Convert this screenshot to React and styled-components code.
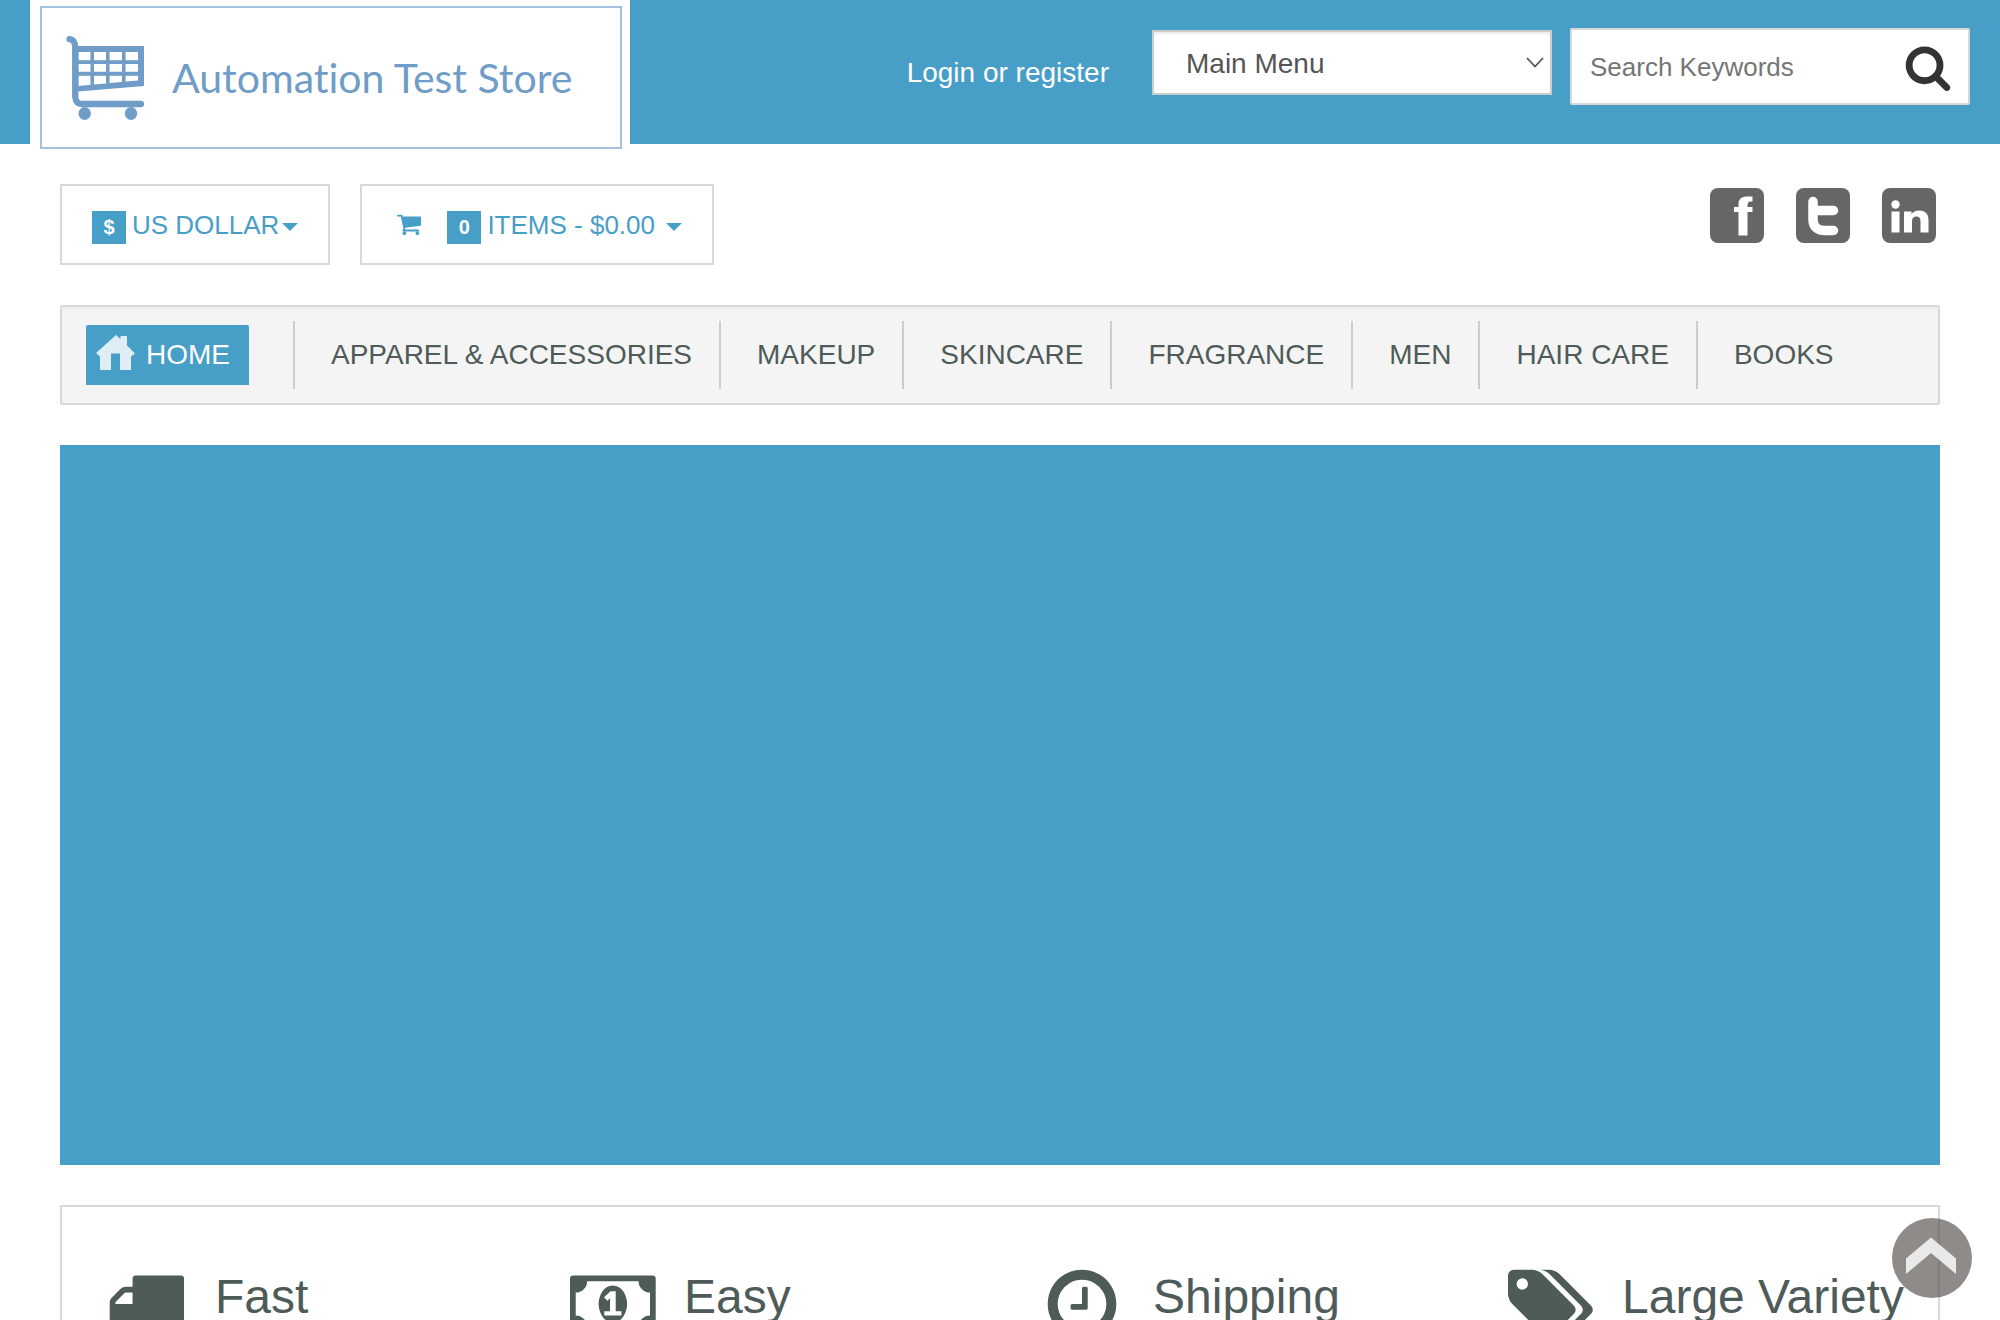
import React from "react";
import styled, { createGlobalStyle } from "styled-components";

const BLUE = "#479ec7";
const SLATE = "#4e5b58";
const LINE = "#d7d9d8";

const GlobalStyle = createGlobalStyle`
  *, *::before, *::after { box-sizing: border-box; }
  html { scrollbar-width: none; }
  body {
    margin: 0;
    background: #fff;
    color: ${SLATE};
    font-family: "Liberation Sans", Arial, Helvetica, sans-serif;
    font-size: 28px;
    line-height: 40px;
  }
  button, input, select { font: inherit; margin: 0; }
  a { color: inherit; text-decoration: none; }
  svg { display: block; flex: none; }
`;

const Page = styled.div`
  display: flex;
  flex-direction: column;
  min-height: 100vh;
`;

/* ---------- header ---------- */

const Header = styled.header`
  flex: none;
  display: flex;
  align-items: flex-start;
  padding: 0 30px;
  background: ${BLUE};
`;

const Logo = styled.a`
  flex: none;
  width: 600px;
  height: 149px;
  margin: 0 auto -5px 0;
  padding: 6px 8px 0 10px;
  background: #fff;
`;

const LogoFrame = styled.span`
  display: flex;
  align-items: center;
  gap: 28px;
  height: 100%;
  padding-left: 24px;
  border: 2px solid #a3c1e0;
  color: #6f9dc8;
  font-family: Lato, "Open Sans", sans-serif;
  font-size: 41px;
  font-variant-ligatures: none;
  white-space: nowrap;
`;

const Login = styled.a`
  margin: 53px 43px 0 20px;
  color: #fff;
  white-space: nowrap;
`;

const MenuBox = styled.div`
  position: relative;
  flex: 0 1 400px;
  min-width: 0;
  margin: 30px 18px 0 0;
  svg {
    position: absolute;
    right: 8px;
    top: 26px;
    pointer-events: none;
  }
`;

const MenuSelect = styled.select`
  display: block;
  appearance: none;
  width: 100%;
  height: 65px;
  padding: 2px 40px 0 32px;
  border: 2px solid #ccc;
  border-radius: 0;
  background: #fff;
  box-shadow: inset 0 2px 2px rgba(0, 0, 0, 0.075);
  color: #555;
`;

const Search = styled.form`
  flex: 0 1 400px;
  min-width: 0;
  display: flex;
  align-items: center;
  height: 77px;
  margin-top: 28px;
  padding: 0 16px 0 18px;
  border: 2px solid ${LINE};
  border-radius: 2px;
  background: #fff;
`;

const SearchInput = styled.input`
  flex: 1;
  min-width: 0;
  padding: 0;
  border: 0;
  outline: 0;
  background: none;
  font-size: 26px;
  &::placeholder { color: #757575; opacity: 1; }
`;

const IconButton = styled.button`
  padding: 0;
  border: 0;
  background: none;
  color: #333;
`;

/* ---------- body ---------- */

const Main = styled.main`
  flex: none;
  display: flex;
  flex-direction: column;
  gap: 40px;
  padding: 40px 60px;
`;

const Tools = styled.div`
  display: flex;
  align-items: flex-start;
  gap: 30px;
`;

const Dropdown = styled.button`
  display: flex;
  align-items: baseline;
  height: 81px;
  padding: 23px 30px 19px ${(p) => (p.$wide ? 34 : 30)}px;
  border: 2px solid ${LINE};
  background: #fff;
  color: ${BLUE};
  font-size: 26px;
  line-height: 33px;
  white-space: nowrap;
  > svg {
    align-self: flex-start;
    margin: 2px 25px 0 0;
  }
`;

const Badge = styled.span`
  width: 34px;
  margin-right: 6px;
  background: ${BLUE};
  color: #fff;
  font-size: 20px;
  font-weight: bold;
  line-height: 33px;
  text-align: center;
`;

const Caret = styled.span`
  align-self: flex-start;
  margin: 14px 0 0 ${(p) => (p.$wide ? 11 : 3)}px;
  border: solid transparent;
  border-width: 8px 8px 0;
  border-top-color: ${BLUE};
`;

const Socials = styled.div`
  display: flex;
  gap: 32px;
  margin: 4px 4px 0 auto;
`;

const Nav = styled.nav`
  display: flex;
  align-items: center;
  height: 100px;
  padding-left: 24px;
  border: 2px solid ${LINE};
  border-radius: 2px;
  background: #f4f4f4;
  box-shadow: inset 0 2px 2px rgba(0, 0, 0, 0.03);
  white-space: nowrap;
`;

const HomeLink = styled.a`
  display: flex;
  align-items: center;
  gap: 11px;
  height: 60px;
  margin-right: 44px;
  padding: 0 19px 0 10px;
  border-radius: 2px 2px 0 0;
  background: ${BLUE};
  color: #fff;
`;

const NavLink = styled.a`
  padding: 0 27px 0 36px;
  border-left: 2px solid #ccc;
  line-height: 68px;
`;

const Banner = styled.section`
  height: 720px;
  background: ${BLUE};
`;

const Features = styled.section`
  display: grid;
  grid-template-columns: repeat(4, 1fr);
  padding: 57px 0;
  border: 2px solid ${LINE};
`;

const Feature = styled.div`
  display: flex;
  align-items: flex-start;
  gap: 20px;
  padding-left: 31px;
`;

const FeatureIcon = styled.span`
  flex: none;
  display: flex;
  justify-content: center;
  width: 102px;
`;

const FeatureTitle = styled.h2`
  margin: 3px 0 0;
  font-size: 48px;
  font-weight: normal;
  line-height: 60px;
  white-space: nowrap;
`;

const ToTop = styled.a`
  position: fixed;
  right: 28px;
  bottom: 22px;
`;

/* ---------- drawings ---------- */

const GLYPHS = {
  cart: {
    w: 1792,
    d: "M704 1536q0 52-38 90t-90 38-90-38-38-90 38-90 90-38 90 38 38 90zm896 0q0 52-38 90t-90 38-90-38-38-90 38-90 90-38 90 38 38 90zm128-1088v512q0 24-16.5 42.5t-40.5 21.5l-1044 122q13 60 13 70 0 16-24 64h920q26 0 45 19t19 45-19 45-45 19h-1024q-26 0-45-19t-19-45q0-11 8-31.5t16-36 21.5-40 15.5-29.5l-177-823h-204q-26 0-45-19t-19-45 19-45 45-19h256q16 0 28.5 6.5t19.5 15.5 13 24.5 8 26 5.5 29.5 4.5 26h1201q26 0 45 19t19 45z",
  },
  search: {
    w: 1792,
    d: "M1216 832q0-185-131.5-316.5t-316.5-131.5-316.5 131.5-131.5 316.5 131.5 316.5 316.5 131.5 316.5-131.5 131.5-316.5zm512 832q0 52-38 90t-90 38q-54 0-90-38l-343-342q-179 124-399 124-143 0-273.5-55.5t-225-150-150-225-55.5-273.5 55.5-273.5 150-225 225-150 273.5-55.5 273.5 55.5 225 150 150 225 55.5 273.5q0 220-124 399l343 343q37 37 37 90z",
  },
  truck: {
    w: 1792,
    d: "M640 1408q0-52-38-90t-90-38-90 38-38 90 38 90 90 38 90-38 38-90zm-384-512h384v-256h-158q-13 0-22 9l-195 195q-9 9-9 22v30zm1280 512q0-52-38-90t-90-38-90 38-38 90 38 90 90 38 90-38 38-90zm256-1088v1024q0 15-4 26.5t-13.5 18.5-16.5 11.5-23.5 6-22.5 2-25.5 0-22.5-.5q0 106-75 181t-181 75-181-75-75-181h-384q0 106-75 181t-181 75-181-75-75-181h-64q-3 0-22.5.5t-25.5 0-22.5-2-23.5-6-16.5-11.5-13.5-18.5-4-26.5q0-26 19-45t45-19v-320q0-8-.5-35t0-38 2.5-34.5 6.5-37 14-30.5 22.5-30l198-198q19-19 50.5-32t58.5-13h160v-192q0-26 19-45t45-19h1024q26 0 45 19t19 45z",
  },
  money: {
    w: 1920,
    d: "M768 1152h384v-96h-128v-448h-114l-148 137 77 80q42-37 55-57h2v288h-128v96zm512-256q0 70-21 142t-59.5 134-101.5 101-138 39-138-39-101.5-101-59.5-134-21-142 21-142 59.5-134 101.5-101 138-39 138 39 101.5 101 59.5 134 21 142zm512 256v-512q-106 0-181-75t-75-181h-1152q0 106-75 181t-181 75v512q106 0 181 75t75 181h1152q0-106 75-181t181-75zm128-832v1152q0 26-19 45t-45 19h-1792q-26 0-45-19t-19-45v-1152q0-26 19-45t45-19h1792q26 0 45 19t19 45z",
  },
  clock: {
    w: 1792,
    d: "M1024 544v448q0 14-9 23t-23 9h-320q-14 0-23-9t-9-23v-64q0-14 9-23t23-9h224v-352q0-14 9-23t23-9h64q14 0 23 9t9 23zm416 352q0-148-73-273t-198-198-273-73-273 73-198 198-73 273 73 273 198 198 273 73 273-73 198-198 73-273zm224 0q0 209-103 385.5t-279.5 279.5-385.5 103-385.5-103-279.5-279.5-103-385.5 103-385.5 279.5-279.5 385.5-103 385.5 103 279.5 279.5 103 385.5z",
  },
  tags: {
    w: 1920,
    d: "M448 448q0-53-37.5-90.5t-90.5-37.5-90.5 37.5-37.5 90.5 37.5 90.5 90.5 37.5 90.5-37.5 37.5-90.5zm1067 576q0 53-37 90l-491 492q-39 37-91 37-53 0-90-37l-715-716q-38-37-64.5-101t-26.5-117v-416q0-52 38-90t90-38h416q53 0 117 26.5t102 64.5l715 714q37 39 37 91zm384 0q0 53-37 90l-491 492q-39 37-91 37-36 0-59-14t-53-45l470-470q37-37 37-90 0-52-37-91l-715-714q-38-38-102-64.5t-117-26.5h224q53 0 117 26.5t102 64.5l715 714q37 39 37 91z",
  },
};

function Glyph({ name, size }) {
  const { w, d } = GLYPHS[name];
  return (
    <svg height={size} width={(size * w) / 1792} viewBox={`0 0 ${w} 1792`} aria-hidden="true">
      <path fill="currentColor" d={d} />
    </svg>
  );
}

function LogoCart() {
  return (
    <svg width="78" height="84" viewBox="66 36 78 84" aria-hidden="true">
      <path
        d="M69.500 39.200C74 39.500 75.200 43 75.200 48V97Q76 104 82 104H141"
        fill="none"
        stroke="currentColor"
        strokeWidth="6.300"
        strokeLinecap="round"
      />
      <path
        fill="currentColor"
        fillRule="evenodd"
        d="M75 46H144V86L75 91.700ZM78.500 52V60.300H90.500V52ZM94 52V60.300H106V52ZM109.500 52V60.300H122V52ZM125.500 52V60.300H138V52ZM78.500 64V71.700H90.500V64ZM94 64V71.700H106V64ZM109.500 64V71.700H122V64ZM125.500 64V71.700H138V64ZM78.500 75.700V86L90.500 84.800V75.700ZM94 75.700V84.500L106 83.400V75.700ZM109.500 75.700V83L122 82V75.700ZM125.500 75.700V81.600L138 80.500V75.700Z"
      />
      <ellipse cx="84.700" cy="113.500" rx="6.200" ry="6.500" fill="currentColor" />
      <ellipse cx="131" cy="113.500" rx="6.200" ry="6.500" fill="currentColor" />
    </svg>
  );
}

function House() {
  return (
    <svg width="39" height="40" viewBox="0 0 39 40" aria-hidden="true">
      <path
        fill="#dfeef6"
        d="M20 0L24.500 4V1H31V10.500L39 18.500L35 21.500V35H24V18.500H15V35H4V21.500L0 18Z"
      />
    </svg>
  );
}

const SOCIAL = {
  Facebook: (
    <path
      fill="#fff"
      d="M42.500 8.500V13.500H40.500Q37.500 13.500 37.500 17V19H42.500V24H37.500V47.500H28.500V24H24V19H28.500V16Q28.500 8.500 36.500 8.500Z"
    />
  ),
  Twitter: (
    <path
      d="M17 13.500V31Q17 42.500 29 42.500H37.500M17 22.500H37.500"
      fill="none"
      stroke="#fff"
      strokeWidth="9.500"
      strokeLinecap="round"
    />
  ),
  LinkedIn: (
    <g fill="#fff">
      <circle cx="13.500" cy="16.500" r="4.200" />
      <path d="M9.500 23.500H17.500V44.500H9.500ZM22 23.500H29.500V26Q32 22.500 37 22.500Q46.500 22.500 46.500 32V44.500H38.500V33Q38.500 28.500 34.500 28.500Q30 28.500 30 33V44.500H22Z" />
    </g>
  ),
};

function SocialIcon({ name }) {
  return (
    <a href="#" aria-label={name}>
      <svg width="54" height="55" viewBox="0 0 54 55" aria-hidden="true">
        <rect width="54" height="55" rx="8" fill="#666" />
        {SOCIAL[name]}
      </svg>
    </a>
  );
}

const CATEGORIES = ["Apparel & Accessories", "Makeup", "Skincare", "Fragrance", "Men", "Hair Care", "Books"];

const FEATURES = [
  { icon: "truck", title: "Fast" },
  { icon: "money", title: "Easy" },
  { icon: "clock", title: "Shipping" },
  { icon: "tags", title: "Large Variety" },
];

export default function App() {
  return (
    <Page>
      <GlobalStyle />
      <Header>
        <Logo href="#">
          <LogoFrame>
            <LogoCart />
            Automation Test Store
          </LogoFrame>
        </Logo>
        <Login href="#">Login or register</Login>
        <MenuBox>
          <MenuSelect aria-label="Main Menu" defaultValue="main">
            <option value="main">Main Menu</option>
          </MenuSelect>
          <svg width="18" height="12" viewBox="0 0 18 12" aria-hidden="true">
            <path d="M1 2L9 10.500L17 2" fill="none" stroke="#555" strokeWidth="1.800" />
          </svg>
        </MenuBox>
        <Search onSubmit={(e) => e.preventDefault()}>
          <SearchInput type="text" placeholder="Search Keywords" aria-label="Search Keywords" />
          <IconButton type="submit" aria-label="Search">
            <Glyph name="search" size={48} />
          </IconButton>
        </Search>
      </Header>

      <Main>
        <Tools>
          <Dropdown type="button">
            <Badge>$</Badge>
            <span>US DOLLAR</span>
            <Caret />
          </Dropdown>
          <Dropdown type="button" $wide>
            <Glyph name="cart" size={26} />
            <Badge>0</Badge>
            <span>ITEMS - $0.00</span>
            <Caret $wide />
          </Dropdown>
          <Socials>
            <SocialIcon name="Facebook" />
            <SocialIcon name="Twitter" />
            <SocialIcon name="LinkedIn" />
          </Socials>
        </Tools>

        <Nav>
          <HomeLink href="#">
            <House />
            HOME
          </HomeLink>
          {CATEGORIES.map((name) => (
            <NavLink href="#" key={name}>
              {name.toUpperCase()}
            </NavLink>
          ))}
        </Nav>

        <Banner aria-label="Promotions" />

        <Features>
          {FEATURES.map(({ icon, title }) => (
            <Feature key={title}>
              <FeatureIcon>
                <Glyph name={icon} size={80} />
              </FeatureIcon>
              <FeatureTitle>{title}</FeatureTitle>
            </Feature>
          ))}
        </Features>
      </Main>

      <ToTop href="#" aria-label="Back to top">
        <svg width="80" height="80" viewBox="0 0 80 80" aria-hidden="true">
          <circle cx="40" cy="40" r="40" fill="#4b4440" fillOpacity="0.62" />
          <path d="M39 19.500L64 40.500V56L39 35L14 56V40.500Z" fill="#fff" fillOpacity="0.82" />
        </svg>
      </ToTop>
    </Page>
  );
}
